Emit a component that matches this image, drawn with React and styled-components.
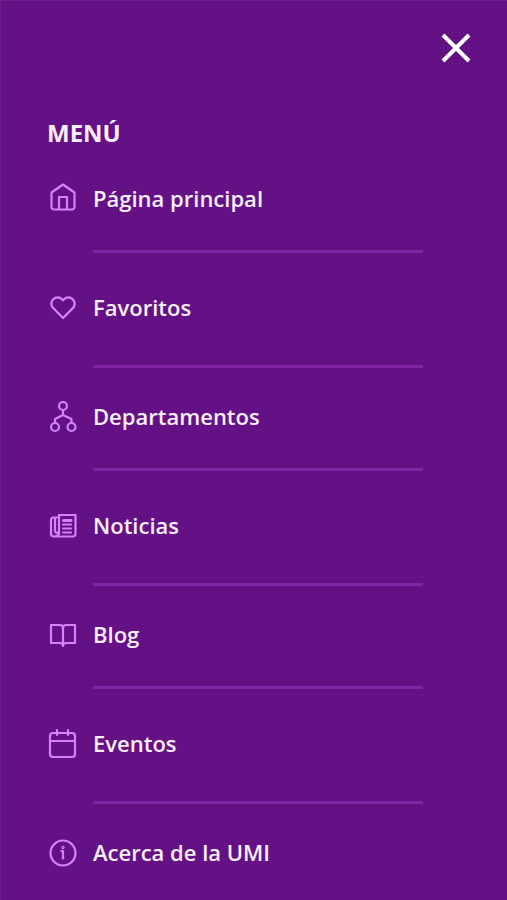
import React from "react";
import styled, { createGlobalStyle, ThemeProvider } from "styled-components";

const theme = {
  bg: "#641186",
  edge: "#6b2090",
  text: "#fbeeff",
  icon: "#d683fb",
  divider: "#8024a6",
};

const GlobalStyle = createGlobalStyle`
  *,
  *::before,
  *::after {
    box-sizing: border-box;
  }
  body {
    margin: 0;
    background-color: ${theme.bg};
    font-family: "Open Sans", "Noto Sans", sans-serif;
  }
`;

const Drawer = styled.aside`
  min-height: 100vh;
  padding: 28px 31px 0 47px;
  background-color: ${({ theme }) => theme.bg};
  box-shadow: inset 1px 1px 0 ${({ theme }) => theme.edge};
  color: ${({ theme }) => theme.text};
`;

const TopBar = styled.div`
  display: flex;
  justify-content: flex-end;
`;

const CloseButton = styled.button`
  display: flex;
  align-items: center;
  justify-content: center;
  width: 40px;
  height: 40px;
  padding: 0;
  border: none;
  background: none;
  color: #ffffff;
  cursor: pointer;
`;

const Title = styled.h2`
  margin: 48px 0 0;
  font-size: 24px;
  font-weight: 700;
  line-height: 34px;
`;

const List = styled.ul`
  margin: 31px 0 0;
  padding: 0;
  list-style: none;
`;

const Item = styled.li`
  padding-right: 53px;
`;

const Link = styled.a`
  display: flex;
  align-items: center;
  gap: 14px;
  height: 34px;
  font-size: 22px;
  font-weight: 600;
  line-height: 34px;
  color: inherit;
  text-decoration: none;
  &:hover {
    text-decoration: underline;
  }
`;

const Icon = styled.svg`
  flex-shrink: 0;
  width: 32px;
  height: 34px;
  fill: none;
  stroke: ${({ theme }) => theme.icon};
  stroke-width: 2.2;
  stroke-linecap: round;
  stroke-linejoin: round;
`;

const Divider = styled.hr`
  height: 3px;
  margin: ${({ $low }) => ($low ? "41px 0 31px 46px" : "35px 0 37px 46px")};
  border: none;
  border-radius: 1px;
  background-color: ${({ theme }) => theme.divider};
`;

const items = [
  {
    label: "Página principal",
    icon: (
      <>
        <path d="M4.5 11.5 16 3.5l11.5 8V26a2.5 2.5 0 0 1-2.5 2.5H7A2.5 2.5 0 0 1 4.5 26Z" />
        <path d="M12 28V16h8v12" />
      </>
    ),
  },
  {
    label: "Favoritos",
    icon: (
      <path d="M16 28 6.2 18.1a6.2 6.2 0 0 1 0-8.8 6.2 6.2 0 0 1 8.8 0l1 1 1-1a6.2 6.2 0 0 1 8.8 0 6.2 6.2 0 0 1 0 8.8Z" />
    ),
  },
  {
    label: "Departamentos",
    icon: (
      <>
        <circle cx="16" cy="7" r="4" />
        <circle cx="8" cy="28" r="4" />
        <circle cx="24.5" cy="28" r="4" />
        <path d="M16 11v5M8 24v-4l8-4 8.5 4v4" />
      </>
    ),
  },
  {
    label: "Noticias",
    icon: (
      <>
        <path d="M12 7h16.5v19a2.5 2.5 0 0 1-2.5 2.5H7a3 3 0 0 1-3-3V12a2.5 2.5 0 0 1 2.5-2.5H12" />
        <path d="M12 7v18a3 3 0 0 1-3 3" />
        <path d="M8 10v13a2 2 0 0 0 3 1.5" />
        <path d="M16.5 12.5H24" strokeWidth="3" />
        <path d="M16 16.5h8M16 20.5h8M16 24.5h8" strokeWidth="2" />
      </>
    ),
  },
  {
    label: "Blog",
    icon: (
      <>
        <path d="M4 8h9a3 3 0 0 1 3 3 3 3 0 0 1 3-3h9v18h-9a3 3 0 0 0-3 3 3 3 0 0 0-3-3H4Z" />
        <path d="M16 11v17" />
      </>
    ),
  },
  {
    label: "Eventos",
    icon: (
      <>
        <rect x="3" y="7" width="25" height="24" rx="3" />
        <path d="M3 15h25M10 4v5M21 4v5" />
      </>
    ),
  },
  {
    label: "Acerca de la UMI",
    icon: (
      <>
        <circle cx="16" cy="18" r="12.5" />
        <path d="M14.5 16H16v7.5" />
        <path d="M15 23.5h2" strokeWidth="1" />
        <circle cx="16" cy="12.5" r="0.6" />
      </>
    ),
  },
];

const App = () => {
  return (
    <ThemeProvider theme={theme}>
      <GlobalStyle />
      <Drawer>
        <TopBar>
          <CloseButton type="button" aria-label="Cerrar">
            <svg width="32" height="32" viewBox="0 0 32 32" fill="none">
              <path d="M3 3 29 29M29 3 3 29" stroke="currentColor" strokeWidth="4" />
            </svg>
          </CloseButton>
        </TopBar>
        <nav aria-labelledby="menu-title">
          <Title id="menu-title">MENÚ</Title>
          <List>
            {items.map((item, index) => (
              <Item key={item.label}>
                <Link href="#">
                  <Icon viewBox="0 0 32 34" aria-hidden="true">
                    {item.icon}
                  </Icon>
                  {item.label}
                </Link>
                {index < items.length - 1 && <Divider $low={index % 2 === 1} />}
              </Item>
            ))}
          </List>
        </nav>
      </Drawer>
    </ThemeProvider>
  );
};

export default App;
